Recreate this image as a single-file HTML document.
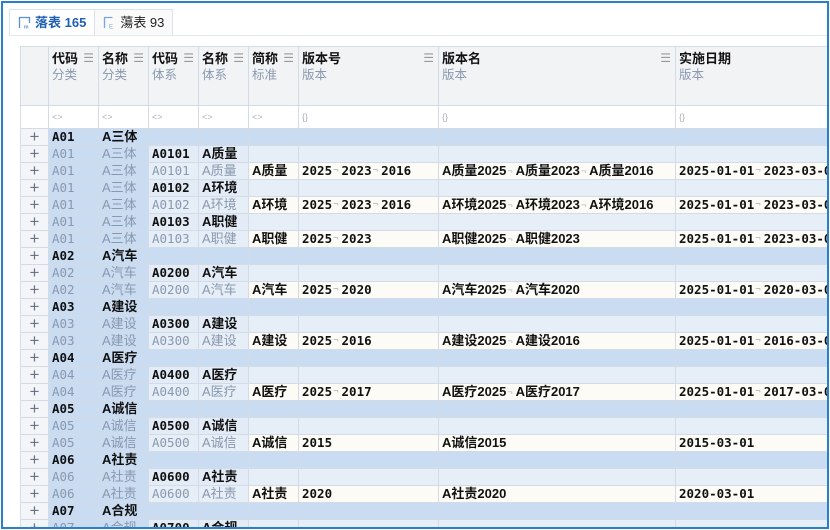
<!DOCTYPE html>
<html><head><meta charset="utf-8">
<style>
*{box-sizing:border-box;margin:0;padding:0}
body{width:830px;height:530px;overflow:hidden;background:#fff;font-family:"Liberation Sans","Noto Sans CJK SC",sans-serif;position:relative}
.frame{position:absolute;left:1px;top:1px;width:828px;height:528px;border:2px solid #2a7fc9;border-bottom:none;z-index:5;pointer-events:none}
.bot{position:absolute;left:1px;top:527px;width:828px;height:2px;background:#2a7fc9;z-index:5}
.tabs{position:absolute;left:9px;top:9px;height:27px;display:flex}
.tab{height:26px;border:1px solid #dde2e8;border-bottom:none;padding:0 8px;font-size:13px;line-height:25px;display:flex;align-items:center;gap:4px;background:#fff;color:#222}
.tab.a{color:#1f5fb3;font-weight:bold}
.tab+.tab{margin-left:-1px;background:#fafafa}
.tabline{position:absolute;left:9px;top:35px;width:820px;height:1px;background:#e4e7eb}
.grid{position:absolute;left:20px;top:46px;width:808px;height:482px;overflow:hidden;border-top:1px solid #d6dde6;border-left:1px solid #d6dde6}
.r{display:flex;height:17px;white-space:nowrap}
.r.h{height:59px}.r.f{height:23px}
.c{flex:none;height:100%;border-right:1px solid #d3dbe6;border-bottom:1px solid #d3dbe6;padding-left:3px;font-size:13px;line-height:16px;font-weight:bold;color:#111;overflow:hidden}
.m{font-family:"DejaVu Sans Mono","Liberation Mono",monospace;font-size:12.5px}
.w0{width:28px}.w1{width:50px}.w6{width:140px}.w7{width:237px}.w8{width:170px}
.p{background:#f3f5f8;color:#6a7482;font-weight:normal;text-align:center;padding:0;font-size:17px;line-height:15px}
.h .c{background:#f2f3f5;padding:3px 3px 0 3px;line-height:17px;position:relative}
.h .c .s{display:block;font-weight:normal;color:#8b9ab0;font-size:12.5px}
.h .c .i{position:absolute;right:4px;top:3px;color:#999;font-weight:normal;font-size:12px}
.f .c{background:#fff;color:#aab3bf;font-weight:normal;font-size:9px;line-height:22px}
.L1 .c{background:#cadcf2}
.L1 .c.p,.L2 .c.p,.L3 .c.p{background:#f3f5f8}
.b{background:#cadcf2 !important}
.g{color:#8a98ad !important;font-weight:normal !important}
.L2 .c{background:#e6eef8}
.L2 .c.lt{background:#e2ebf6}
.L3 .c{background:#fcfbf5}
.L3 .c.lt{background:#e6eef8}
.n{color:#b0b0b0;font-weight:normal;font-size:9px;vertical-align:top;margin:0 3px 0 1px}
</style></head><body>
<div class="frame"></div><div class="bot"></div>
<div class="tabs">
<div class="tab a"><svg width="13" height="13" viewBox="0 0 13 13"><path d="M1.5 12V1.5h10V7" fill="none" stroke="#5a8fd0" stroke-width="1.3"/><text x="6" y="12.5" font-size="5" fill="#5a8fd0" font-family="Liberation Sans">m</text></svg>落表 165</div>
<div class="tab"><svg width="13" height="13" viewBox="0 0 13 13"><path d="M1.5 12V1.5h8" fill="none" stroke="#7aa6dc" stroke-width="1.3"/><text x="6" y="12.5" font-size="6" fill="#7aa6dc" font-family="Liberation Sans">E</text></svg>蕩表 93</div>
</div>
<div class="tabline"></div>
<div class="grid">
<div class="r h"><div class="c w0"></div>
<div class="c w1">代码<span class="i">☰</span><span class="s">分类</span></div>
<div class="c w1">名称<span class="i">☰</span><span class="s">分类</span></div>
<div class="c w1">代码<span class="i">☰</span><span class="s">体系</span></div>
<div class="c w1">名称<span class="i">☰</span><span class="s">体系</span></div>
<div class="c w1">简称<span class="i">☰</span><span class="s">标准</span></div>
<div class="c w6">版本号<span class="i">☰</span><span class="s">版本</span></div>
<div class="c w7">版本名<span class="i">☰</span><span class="s">版本</span></div>
<div class="c w8">实施日期<span class="s">版本</span></div></div>
<div class="r f"><div class="c w0"></div><div class="c w1">&lt;&gt;</div><div class="c w1">&lt;&gt;</div><div class="c w1">&lt;&gt;</div><div class="c w1">&lt;&gt;</div><div class="c w1">&lt;&gt;</div><div class="c w6">{}</div><div class="c w7">{}</div><div class="c w8">{}</div></div>

<div class="r L1"><div class="c w0 p">+</div><div class="c w1 m">A01</div><div class="c w1">A三体</div><div class="c w1"></div><div class="c w1"></div><div class="c w1"></div><div class="c w6"></div><div class="c w7"></div><div class="c w8"></div></div>
<div class="r L2"><div class="c w0 p">+</div><div class="c w1 m b g">A01</div><div class="c w1 b g">A三体</div><div class="c w1 m lt">A0101</div><div class="c w1 lt">A质量</div><div class="c w1"></div><div class="c w6"></div><div class="c w7"></div><div class="c w8"></div></div>
<div class="r L3"><div class="c w0 p">+</div><div class="c w1 m b g">A01</div><div class="c w1 b g">A三体</div><div class="c w1 m lt g">A0101</div><div class="c w1 lt g">A质量</div><div class="c w1">A质量</div><div class="c w6 m">2025<span class="n">¬</span>2023<span class="n">¬</span>2016</div><div class="c w7">A质量2025<span class="n">¬</span>A质量2023<span class="n">¬</span>A质量2016</div><div class="c w8 m">2025-01-01<span class="n">¬</span>2023-03-01</div></div>
<div class="r L2"><div class="c w0 p">+</div><div class="c w1 m b g">A01</div><div class="c w1 b g">A三体</div><div class="c w1 m lt">A0102</div><div class="c w1 lt">A环境</div><div class="c w1"></div><div class="c w6"></div><div class="c w7"></div><div class="c w8"></div></div>
<div class="r L3"><div class="c w0 p">+</div><div class="c w1 m b g">A01</div><div class="c w1 b g">A三体</div><div class="c w1 m lt g">A0102</div><div class="c w1 lt g">A环境</div><div class="c w1">A环境</div><div class="c w6 m">2025<span class="n">¬</span>2023<span class="n">¬</span>2016</div><div class="c w7">A环境2025<span class="n">¬</span>A环境2023<span class="n">¬</span>A环境2016</div><div class="c w8 m">2025-01-01<span class="n">¬</span>2023-03-01</div></div>
<div class="r L2"><div class="c w0 p">+</div><div class="c w1 m b g">A01</div><div class="c w1 b g">A三体</div><div class="c w1 m lt">A0103</div><div class="c w1 lt">A职健</div><div class="c w1"></div><div class="c w6"></div><div class="c w7"></div><div class="c w8"></div></div>
<div class="r L3"><div class="c w0 p">+</div><div class="c w1 m b g">A01</div><div class="c w1 b g">A三体</div><div class="c w1 m lt g">A0103</div><div class="c w1 lt g">A职健</div><div class="c w1">A职健</div><div class="c w6 m">2025<span class="n">¬</span>2023</div><div class="c w7">A职健2025<span class="n">¬</span>A职健2023</div><div class="c w8 m">2025-01-01<span class="n">¬</span>2023-03-01</div></div>

<div class="r L1"><div class="c w0 p">+</div><div class="c w1 m">A02</div><div class="c w1">A汽车</div><div class="c w1"></div><div class="c w1"></div><div class="c w1"></div><div class="c w6"></div><div class="c w7"></div><div class="c w8"></div></div>
<div class="r L2"><div class="c w0 p">+</div><div class="c w1 m b g">A02</div><div class="c w1 b g">A汽车</div><div class="c w1 m lt">A0200</div><div class="c w1 lt">A汽车</div><div class="c w1"></div><div class="c w6"></div><div class="c w7"></div><div class="c w8"></div></div>
<div class="r L3"><div class="c w0 p">+</div><div class="c w1 m b g">A02</div><div class="c w1 b g">A汽车</div><div class="c w1 m lt g">A0200</div><div class="c w1 lt g">A汽车</div><div class="c w1">A汽车</div><div class="c w6 m">2025<span class="n">¬</span>2020</div><div class="c w7">A汽车2025<span class="n">¬</span>A汽车2020</div><div class="c w8 m">2025-01-01<span class="n">¬</span>2020-03-01</div></div>

<div class="r L1"><div class="c w0 p">+</div><div class="c w1 m">A03</div><div class="c w1">A建设</div><div class="c w1"></div><div class="c w1"></div><div class="c w1"></div><div class="c w6"></div><div class="c w7"></div><div class="c w8"></div></div>
<div class="r L2"><div class="c w0 p">+</div><div class="c w1 m b g">A03</div><div class="c w1 b g">A建设</div><div class="c w1 m lt">A0300</div><div class="c w1 lt">A建设</div><div class="c w1"></div><div class="c w6"></div><div class="c w7"></div><div class="c w8"></div></div>
<div class="r L3"><div class="c w0 p">+</div><div class="c w1 m b g">A03</div><div class="c w1 b g">A建设</div><div class="c w1 m lt g">A0300</div><div class="c w1 lt g">A建设</div><div class="c w1">A建设</div><div class="c w6 m">2025<span class="n">¬</span>2016</div><div class="c w7">A建设2025<span class="n">¬</span>A建设2016</div><div class="c w8 m">2025-01-01<span class="n">¬</span>2016-03-01</div></div>

<div class="r L1"><div class="c w0 p">+</div><div class="c w1 m">A04</div><div class="c w1">A医疗</div><div class="c w1"></div><div class="c w1"></div><div class="c w1"></div><div class="c w6"></div><div class="c w7"></div><div class="c w8"></div></div>
<div class="r L2"><div class="c w0 p">+</div><div class="c w1 m b g">A04</div><div class="c w1 b g">A医疗</div><div class="c w1 m lt">A0400</div><div class="c w1 lt">A医疗</div><div class="c w1"></div><div class="c w6"></div><div class="c w7"></div><div class="c w8"></div></div>
<div class="r L3"><div class="c w0 p">+</div><div class="c w1 m b g">A04</div><div class="c w1 b g">A医疗</div><div class="c w1 m lt g">A0400</div><div class="c w1 lt g">A医疗</div><div class="c w1">A医疗</div><div class="c w6 m">2025<span class="n">¬</span>2017</div><div class="c w7">A医疗2025<span class="n">¬</span>A医疗2017</div><div class="c w8 m">2025-01-01<span class="n">¬</span>2017-03-01</div></div>

<div class="r L1"><div class="c w0 p">+</div><div class="c w1 m">A05</div><div class="c w1">A诚信</div><div class="c w1"></div><div class="c w1"></div><div class="c w1"></div><div class="c w6"></div><div class="c w7"></div><div class="c w8"></div></div>
<div class="r L2"><div class="c w0 p">+</div><div class="c w1 m b g">A05</div><div class="c w1 b g">A诚信</div><div class="c w1 m lt">A0500</div><div class="c w1 lt">A诚信</div><div class="c w1"></div><div class="c w6"></div><div class="c w7"></div><div class="c w8"></div></div>
<div class="r L3"><div class="c w0 p">+</div><div class="c w1 m b g">A05</div><div class="c w1 b g">A诚信</div><div class="c w1 m lt g">A0500</div><div class="c w1 lt g">A诚信</div><div class="c w1">A诚信</div><div class="c w6 m">2015</div><div class="c w7">A诚信2015</div><div class="c w8 m">2015-03-01</div></div>

<div class="r L1"><div class="c w0 p">+</div><div class="c w1 m">A06</div><div class="c w1">A社责</div><div class="c w1"></div><div class="c w1"></div><div class="c w1"></div><div class="c w6"></div><div class="c w7"></div><div class="c w8"></div></div>
<div class="r L2"><div class="c w0 p">+</div><div class="c w1 m b g">A06</div><div class="c w1 b g">A社责</div><div class="c w1 m lt">A0600</div><div class="c w1 lt">A社责</div><div class="c w1"></div><div class="c w6"></div><div class="c w7"></div><div class="c w8"></div></div>
<div class="r L3"><div class="c w0 p">+</div><div class="c w1 m b g">A06</div><div class="c w1 b g">A社责</div><div class="c w1 m lt g">A0600</div><div class="c w1 lt g">A社责</div><div class="c w1">A社责</div><div class="c w6 m">2020</div><div class="c w7">A社责2020</div><div class="c w8 m">2020-03-01</div></div>

<div class="r L1"><div class="c w0 p">+</div><div class="c w1 m">A07</div><div class="c w1">A合规</div><div class="c w1"></div><div class="c w1"></div><div class="c w1"></div><div class="c w6"></div><div class="c w7"></div><div class="c w8"></div></div>
<div class="r L2"><div class="c w0 p">+</div><div class="c w1 m b g">A07</div><div class="c w1 b g">A合规</div><div class="c w1 m lt">A0700</div><div class="c w1 lt">A合规</div><div class="c w1"></div><div class="c w6"></div><div class="c w7"></div><div class="c w8"></div></div>
</div>
</body></html>
